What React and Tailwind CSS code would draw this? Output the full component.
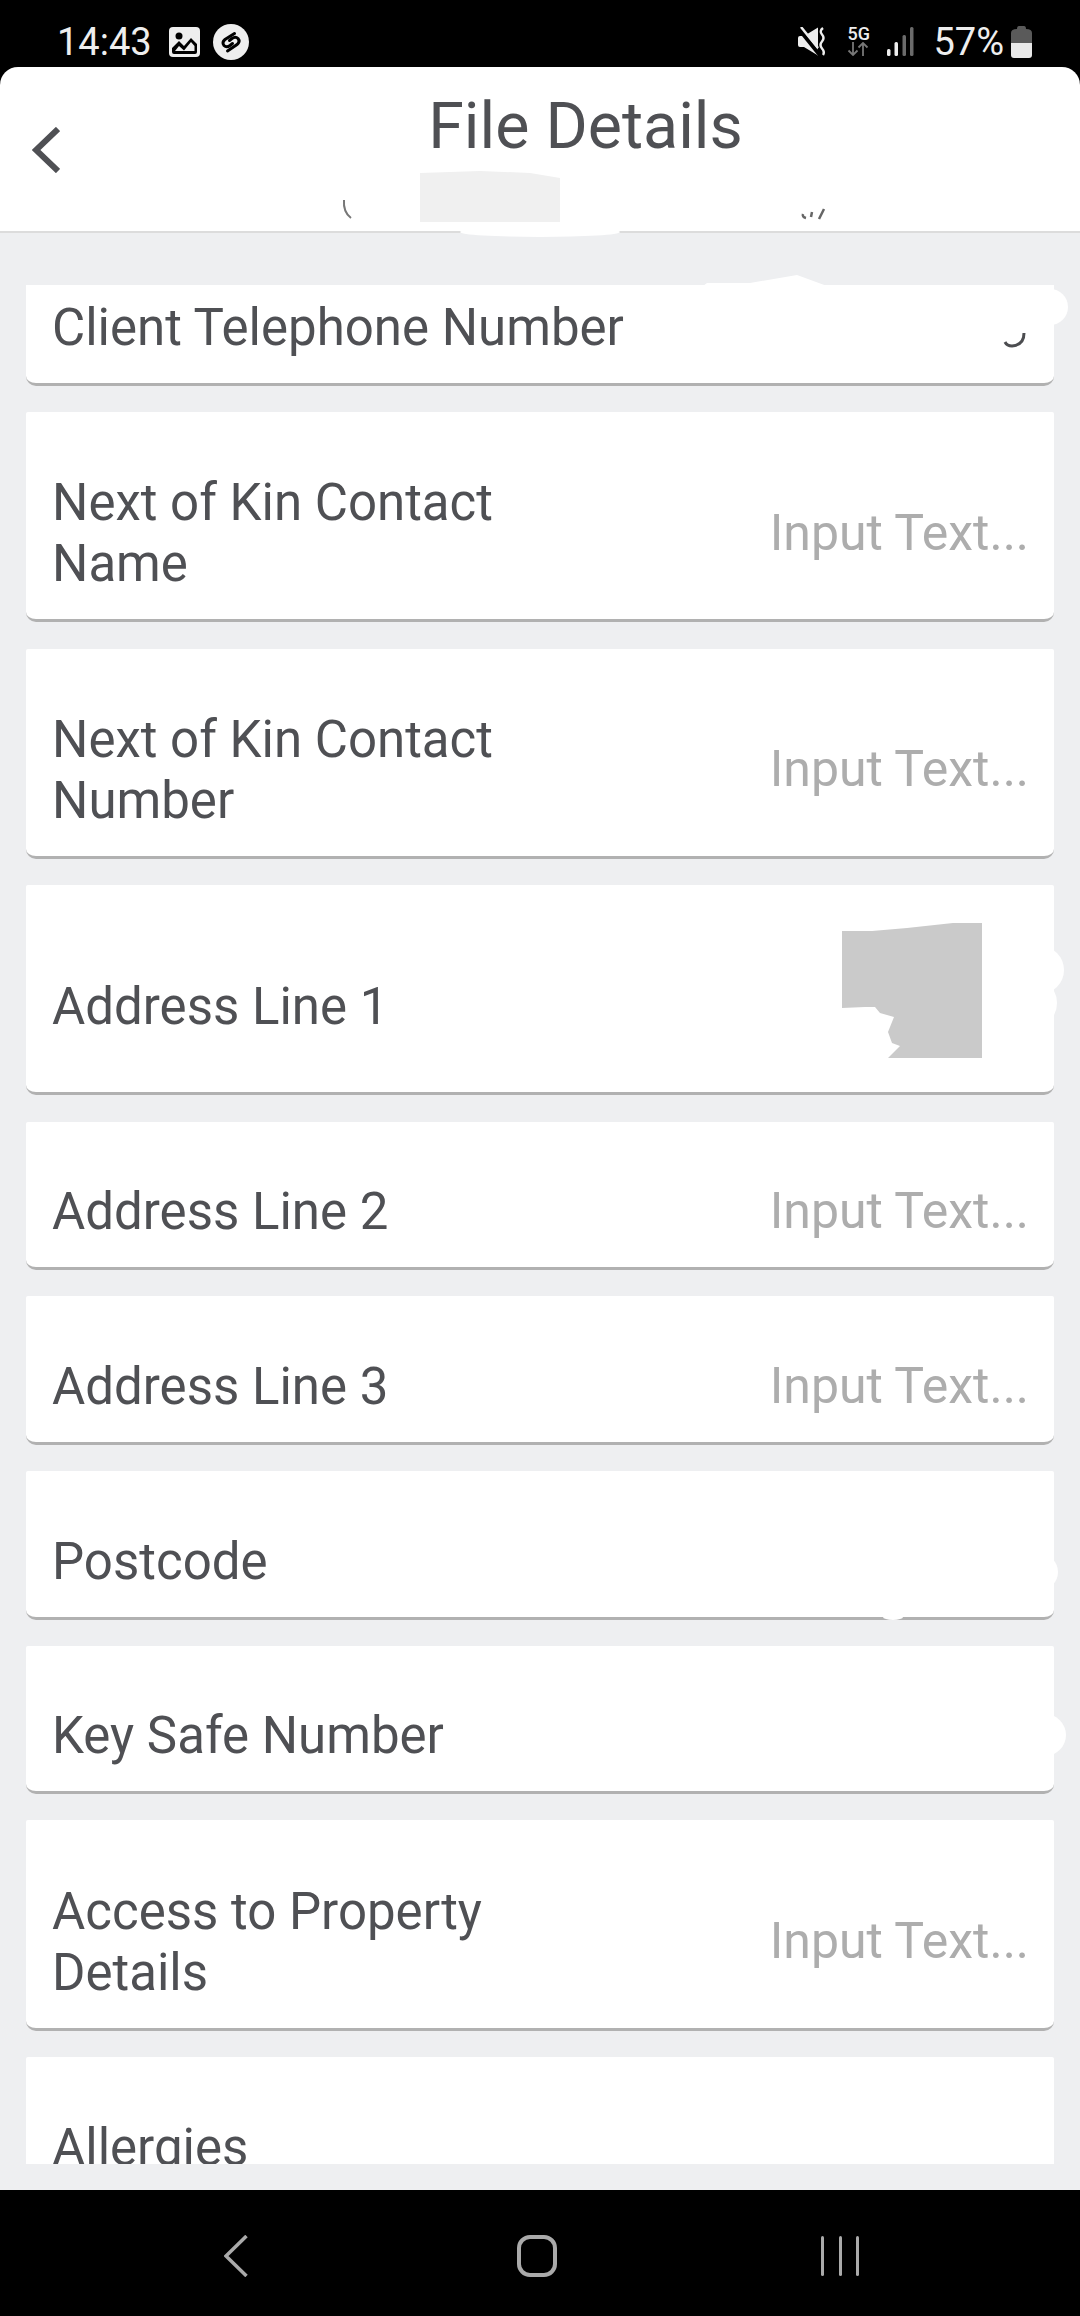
import React from "react";

const rows = [
  { label: "Client Telephone Number", first: true },
  { label: "Next of Kin Contact Name", input: true, tall: true },
  { label: "Next of Kin Contact Number", input: true, tall: true },
  { label: "Address Line 1", tall: true },
  { label: "Address Line 2", input: true },
  { label: "Address Line 3", input: true },
  { label: "Postcode" },
  { label: "Key Safe Number" },
  { label: "Access to Property Details", input: true, tall: true },
  { label: "Allergies" },
];

function Row({ label, input, tall, first }) {
  return (
    <div
      className={`shrink-0 flex items-center justify-between bg-white rounded-t-[2px] rounded-b-[10px] border-b-[3px] border-[#b1b1b1] pl-[26px] pr-[25px] pt-[35px] ${
        tall ? "h-[210.3px]" : "h-[148.5px]"
      } ${first ? "-mt-[47.5px]" : ""}`}
    >
      <div className={`text-[#4f5054] text-[51px] leading-[61px] ${input ? "w-[480px]" : "whitespace-nowrap"}`}>{label}</div>
      {input && <div className="text-[#adadad] text-[50px] leading-[61px] whitespace-nowrap">Input Text...</div>}
    </div>
  );
}

function GalleryIcon() {
  return (
    <svg width="31" height="30" viewBox="0 0 31 30">
      <rect width="31" height="30" rx="4" fill="#eeeeee" />
      <circle cx="10" cy="9" r="3.5" fill="#000" />
      <path d="M3 25 V21 L10 14 L15 19 L22 11 L28 17 V25 Q28 27 26 27 H5 Q3 27 3 25 Z" fill="#000" />
      <path d="M6 24 L10 19 L15 23.5 L22 15 L25.5 19 V24 Z" fill="#eeeeee" />
    </svg>
  );
}

function ShazamIcon() {
  return (
    <svg width="36" height="36" viewBox="0 0 36 36">
      <circle cx="18" cy="18" r="18" fill="#eeeeee" />
      <path d="M21.5 9.5 L12 15.5 Q8.5 18.5 11 21.5 Q13.5 24 17 21.5 L19.5 19.5" fill="none" stroke="#000" strokeWidth="3" strokeLinecap="round" />
      <path d="M14.5 27 L24 20.5 Q27.5 17.5 25 14.5 Q22.5 12 19 14.5 L16.5 16.5" fill="none" stroke="#000" strokeWidth="3" strokeLinecap="round" />
    </svg>
  );
}

function MuteIcon() {
  return (
    <svg width="29" height="29" viewBox="0 0 29 29">
      <path d="M0 11 Q0 9 2 9 H6 L20 0.5 V28.5 L6 20 H2 Q0 20 0 18 Z" fill="#eeeeee" />
      <path d="M1 2 L21 27" stroke="#000" strokeWidth="4" />
      <path d="M3 0 L20 21" stroke="#eeeeee" strokeWidth="2.5" />
      <path d="M25 1 Q21 4 24 7.5 Q27 11 24 14.5 Q21 18 24 21.5 Q27 25 25 28" fill="none" stroke="#eeeeee" strokeWidth="2.4" />
    </svg>
  );
}

function FiveGIcon() {
  return (
    <div className="relative w-[22px] h-[30px] -mt-[1px]">
      <div className="text-[#eeeeee] text-[18px] leading-[15px] font-medium text-center">5G</div>
      <svg className="absolute left-0 top-[16px]" width="22" height="14" viewBox="0 0 22 14">
        <path d="M6 0 V13 M1.5 8.5 L6 13 L10.5 8.5" fill="none" stroke="#777" strokeWidth="1.8" />
        <path d="M16 14 V1 M11.5 5.5 L16 1 L20.5 5.5" fill="none" stroke="#777" strokeWidth="1.8" />
      </svg>
    </div>
  );
}

function SignalIcon() {
  return (
    <svg width="27" height="29" viewBox="0 0 27 29">
      <rect x="0" y="22" width="3.5" height="7" rx="1.5" fill="#eeeeee" />
      <rect x="7.5" y="15" width="3.5" height="14" rx="1.5" fill="#eeeeee" />
      <rect x="15.5" y="8" width="3.5" height="21" rx="1.5" fill="#6b6b6b" />
      <rect x="23" y="0" width="3.5" height="29" rx="1.5" fill="#6b6b6b" />
    </svg>
  );
}

function BatteryIcon() {
  return (
    <svg width="21" height="32" viewBox="0 0 21 32">
      <path d="M6 3 Q6 0 8 0 H13 Q15 0 15 3 Q21 3 21 7 V17 H0 V7 Q0 3 6 3 Z" fill="#5a5a5a" />
      <path d="M0 17 H21 V29 Q21 32 18 32 H3 Q0 32 0 29 Z" fill="#e8e8e8" />
    </svg>
  );
}

export default function App() {
  return (
    <div className="relative w-[1080px] h-[2316px] overflow-hidden bg-black flex flex-col font-['Roboto',sans-serif]">
      {/* status bar */}
      <div className="h-[67px] shrink-0 flex items-center justify-between pl-[57px] pr-[48px] pt-[16px]">
        <div className="flex items-center">
          <span className="text-[#eeeeee] text-[38px] leading-[44px]">14:43</span>
          <div className="ml-[17px]"><GalleryIcon /></div>
          <div className="ml-[13px]"><ShazamIcon /></div>
        </div>
        <div className="flex items-center">
          <MuteIcon />
          <div className="ml-[20px]"><FiveGIcon /></div>
          <div className="ml-[18px]"><SignalIcon /></div>
          <span className="ml-[19px] text-[#eeeeee] text-[38px] leading-[44px]">57%</span>
          <div className="ml-[7px]"><BatteryIcon /></div>
        </div>
      </div>

      {/* header */}
      <div className="h-[166px] shrink-0 flex items-start bg-white rounded-t-[18px] border-b-[2px] border-[#dcdcdc]">
        <svg className="ml-[32px] mt-[60px] shrink-0" width="28" height="46" viewBox="0 0 28 46">
          <path d="M26 2 L4 23 L26 44" fill="none" stroke="#4f5054" strokeWidth="6" />
        </svg>
        <div className="flex-1 pl-[31px] pt-[24px] text-center text-[#4f5054] text-[64.5px] leading-[70px]">File Details</div>
      </div>

      {/* form */}
      <div className="flex-1 bg-[#eeeff1] px-[26px] pt-[52px] pb-[26px] flex flex-col min-h-0">
        <div className="flex-1 min-h-0 overflow-hidden flex flex-col gap-[26.2px]">
          {rows.map((row) => (
            <Row key={row.label} {...row} />
          ))}
        </div>
      </div>

      {/* nav bar */}
      <div className="h-[126px] shrink-0 flex items-start bg-black pt-[45px]">
        <svg className="ml-[224px]" width="24" height="42" viewBox="0 0 24 42">
          <path d="M22.5 1 L2 21 L22.5 41" fill="none" stroke="#aaaaaa" strokeWidth="3.5" />
        </svg>
        <svg className="ml-[269px]" width="40" height="42" viewBox="0 0 40 42">
          <rect x="2" y="2" width="36" height="38" rx="11" fill="none" stroke="#aaaaaa" strokeWidth="4" />
        </svg>
        <div className="ml-[264px] flex gap-[14.5px] h-[40px] mt-[1px]">
          <div className="w-[3px] rounded-full bg-[#aaaaaa]" />
          <div className="w-[3px] rounded-full bg-[#aaaaaa]" />
          <div className="w-[3px] rounded-full bg-[#aaaaaa]" />
        </div>
      </div>

      {/* redaction marks painted on the screenshot */}
      <svg className="absolute left-0 top-0 pointer-events-none" width="1080" height="2316" viewBox="0 0 1080 2316">
        <path d="M420 173 L480 171 L530 173 L560 178 V222 H420 Z" fill="#f0f0f0" />
        <path d="M344 200 Q343 212 351 218" fill="none" stroke="#777" strokeWidth="2" />
        <path d="M803 214 Q802 217 806 218 M824 209 L819 219 M812 212 L811 217" fill="none" stroke="#666" strokeWidth="2.5" />
        <ellipse cx="540" cy="232" rx="80" ry="5" fill="#fff" />
        <path d="M703 286 L707 283 L750 283 L797 275 L827 286 Z" fill="#fff" />
        <circle cx="1050" cy="307" r="18" fill="#fff" />
        <path d="M1024 333 Q1024 345 1012 346 Q1007 346 1005 342" fill="none" stroke="#4c4d50" strokeWidth="3" />
        <path
          d="M842 931 L872 931 L907 928 L953 923 H982 V1058 H888 L900 1046 L892 1043 L888 1032 L894 1017 L880 1013 L875 1007 H865 L842 1008 Z"
          fill="#cacaca"
        />
        <circle cx="1040" cy="970" r="24" fill="#fff" />
        <ellipse cx="1048" cy="1003" rx="9" ry="16" fill="#fff" />
        <circle cx="1040" cy="1572" r="18" fill="#fff" />
        <ellipse cx="893" cy="1617" rx="10" ry="3" fill="#fff" />
        <circle cx="1045" cy="1735" r="21" fill="#fff" />
      </svg>
    </div>
  );
}
